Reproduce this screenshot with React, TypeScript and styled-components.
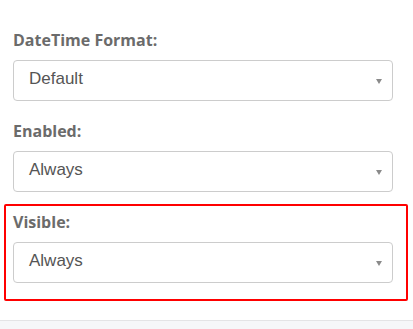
import styled, { createGlobalStyle } from "styled-components";
import { FC } from "react";

const GlobalStyle = createGlobalStyle`
  html, body {
    margin: 0;
    padding: 0;
    background: #fff;
  }
`;

const fields = [
  { label: "DateTime Format:", value: "Default" },
  { label: "Enabled:", value: "Always" },
  { label: "Visible:", value: "Always", highlighted: true },
];

const App: FC = () => {
  return (
    <>
      <GlobalStyle />
      <Panel>
        <Form>
          {fields.map((f) => (
            <Group key={f.label} $highlighted={f.highlighted}>
              <Label>{f.label}</Label>
              <Select>
                <SelectValue>{f.value}</SelectValue>
                <Caret />
              </Select>
            </Group>
          ))}
        </Form>
        <Footer />
      </Panel>
    </>
  );
};

export default App;

const Panel = styled.div`
  width: 413px;
  height: 329px;
  overflow: hidden;
  display: flex;
  flex-direction: column;
`;

const Form = styled.div`
  display: flex;
  flex-direction: column;
  gap: 20px;
  padding: 30px 20px 37px 13px;
`;

const Group = styled.div<{ $highlighted?: boolean }>`
  position: relative;
  display: flex;
  flex-direction: column;
  gap: 10px;

  ${(p) =>
    p.$highlighted &&
    `
    &::after {
      content: "";
      position: absolute;
      top: -8px;
      left: -9px;
      right: -15px;
      bottom: -18px;
      border: 2px solid #ff0000;
      border-radius: 2px;
      pointer-events: none;
    }
  `}
`;

const Label = styled.div`
  font-family: "Open Sans", "Liberation Sans", sans-serif;
  font-weight: 700;
  font-size: 16px;
  line-height: 20px;
  color: #6b6b6b;
`;

const Select = styled.div`
  box-sizing: border-box;
  height: 41px;
  border: 1px solid #cccccc;
  border-radius: 4px;
  background: #fff;
  display: flex;
  align-items: center;
  justify-content: space-between;
  padding: 0 10px 0 15px;
`;

const SelectValue = styled.span`
  font-family: "Liberation Sans", Arial, sans-serif;
  font-size: 17px;
  color: #555555;
  margin-top: -3px;
`;

const Caret = styled.span`
  width: 0;
  height: 0;
  border-left: 3px solid transparent;
  border-right: 3px solid transparent;
  border-top: 5px solid #8a8a8a;
  margin-top: 1px;
`;

const Footer = styled.div`
  flex: 1;
  border-top: 1px solid #e4e4e6;
  background: #f6f7f9;
`;
